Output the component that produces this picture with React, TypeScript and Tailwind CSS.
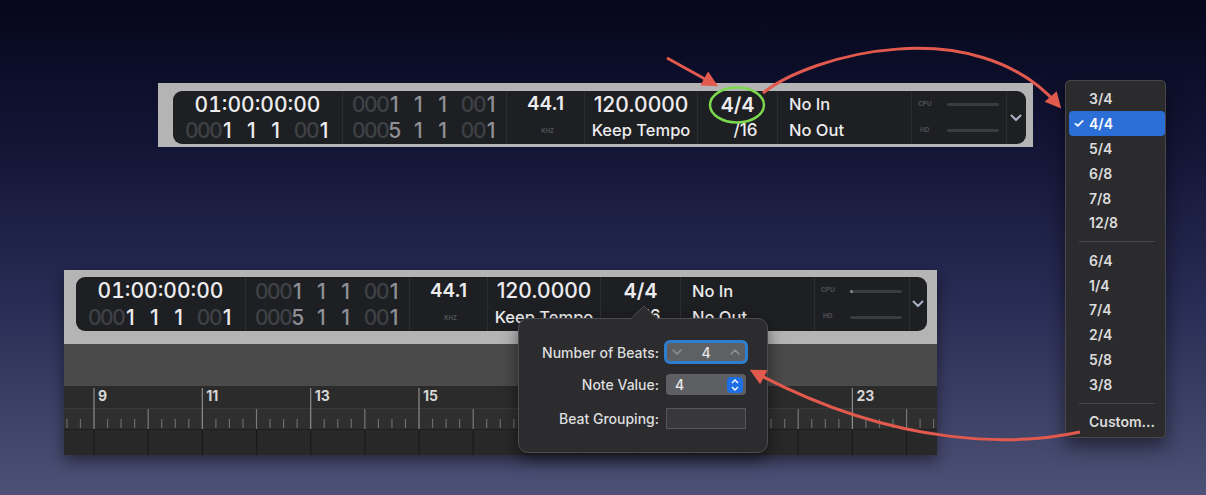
import React from "react";

type Seg = [string, string];

function Mono({ segs }: { segs: Seg[] }) {
  const out: React.ReactNode[] = [];
  segs.forEach(([t, c], i) => {
    t.split("").forEach((ch, j) => {
      out.push(
        <span key={i + "-" + j} className={"inline-block w-[12.1px] text-center " + c}>
          {ch === " " ? "\u00a0" : ch}
        </span>
      );
    });
  });
  return <div className="flex text-[21px] font-medium leading-none">{out}</div>;
}

const DIM = "text-[#3f4146]";
const MID = "text-[#8e9095]";
const BRIGHT = "text-[#ececee]";

function Chevron({ cls }: { cls: string }) {
  return (
    <svg width="12" height="8" viewBox="0 0 12 8" className={cls}>
      <polyline points="1.5,1.5 6,6 10.5,1.5" fill="none" stroke="#aab4c6" strokeWidth="2" strokeLinecap="round" strokeLinejoin="round" />
    </svg>
  );
}

function LCD({ level }: { level?: boolean }) {
  const col = "flex flex-col justify-center border-r border-[#2c2d31]";
  const row = "h-[26px] flex items-center justify-center";
  return (
    <div className="flex h-full w-full rounded-[9px] bg-[#1e1f22] text-[#ececee]">
      <div className={col + " w-[170px]"}>
        <div className={row + " text-[21px] font-medium tabular-nums"}>01:00:00:00</div>
        <div className={row}>
          <Mono segs={[["000", DIM], ["1 1 1 ", BRIGHT], ["00", DIM], ["1", BRIGHT]]} />
        </div>
      </div>
      <div className={col + " w-[164px]"}>
        <div className={row}>
          <Mono segs={[["000", DIM], ["1 1 1 ", MID], ["00", DIM], ["1", MID]]} />
        </div>
        <div className={row}>
          <Mono segs={[["000", DIM], ["5 1 1 ", MID], ["00", DIM], ["1", MID]]} />
        </div>
      </div>
      <div className={col + " w-[78px]"}>
        <div className={row + " text-[19px] font-semibold"}>44.1</div>
        <div className={row + " text-[6px] font-semibold text-[#55575c] pl-[4px]"}>KHZ</div>
      </div>
      <div className={col + " w-[113px]"}>
        <div className={row + " text-[21px] font-medium"}>120.0000</div>
        <div className={row + " text-[16.5px] font-medium"}>Keep Tempo</div>
      </div>
      <div className={col + " w-[80px]"}>
        <div className={row + " text-[20px] font-semibold"}>4/4</div>
        <div className={row + " text-[17px] font-medium pl-[16px]"}>/16</div>
      </div>
      <div className={col + " w-[134px] pl-[11px]"}>
        <div className="h-[26px] flex items-center text-[16.5px] font-medium">No In</div>
        <div className="h-[26px] flex items-center text-[16.5px] font-medium">No Out</div>
      </div>
      <div className={col + " w-[95px] pl-[6px]"}>
        <div className="h-[26px] flex items-center">
          <span className="w-[29px] text-[6.5px] font-bold text-[#4d4f55]">CPU</span>
          <div className="relative h-[3px] w-[52px] rounded-full bg-[#3b3c41]">
            {level ? <div className="absolute left-0 top-0 h-[3px] w-[3px] rounded-full bg-[#8a8c92]" /> : null}
          </div>
        </div>
        <div className="h-[26px] flex items-center">
          <span className="w-[29px] pl-[2px] text-[6.5px] font-bold text-[#4d4f55]">HD</span>
          <div className="h-[3px] w-[52px] rounded-full bg-[#3b3c41]" />
        </div>
      </div>
      <div className="flex flex-1 items-center justify-center pr-[2px]">
        <Chevron cls="" />
      </div>
    </div>
  );
}

function Ruler() {
  const W = 873;
  const x0 = 30;
  const bw = 54.17;
  const hidden = [17, 19, 21];
  const els: React.ReactNode[] = [];
  for (let b = -1; b <= 16; b++) {
    const x = x0 + b * bw;
    const bar = 9 + b;
    for (let k = 1; k < 4; k++) {
      const tx = x + k * (bw / 4);
      if (tx > 0 && tx < W) els.push(<line key={"t" + b + k} x1={tx} x2={tx} y1={33} y2={42} stroke="#6c6c6c" strokeWidth="1.2" />);
    }
    if (x < 0 || x > W) continue;
    if (bar % 2 === 1) {
      els.push(<line key={"m" + b} x1={x} x2={x} y1={2} y2={43} stroke="#8e8e8e" strokeWidth="1.2" />);
      if (hidden.indexOf(bar) < 0)
        els.push(
          <text key={"n" + b} x={x + 4} y={15} fill="#d6d6d6" fontSize="14" fontWeight="700" fontFamily="Inter, 'Liberation Sans', sans-serif">
            {bar}
          </text>
        );
    } else {
      els.push(<line key={"e" + b} x1={x} x2={x} y1={23} y2={43} stroke="#7a7a7a" strokeWidth="1.2" />);
    }
    els.push(<line key={"g" + b} x1={x} x2={x} y1={43} y2={69} stroke="#1a1a1a" strokeWidth="1.2" />);
  }
  return (
    <svg width={W} height={69} className="block">
      <rect x={0} y={0} width={W} height={22} fill="#2b2b2b" />
      <rect x={0} y={22} width={W} height={21} fill="#2f2f2f" />
      <line x1={0} x2={W} y1={22.5} y2={22.5} stroke="#3a3a3a" />
      <rect x={0} y={43} width={W} height={26} fill="#282828" />
      <line x1={0} x2={W} y1={43.5} y2={43.5} stroke="#1e1e1e" />
      {els}
    </svg>
  );
}

const MENU: (string | null)[] = ["3/4", "4/4", "5/4", "6/8", "7/8", "12/8", null, "6/4", "1/4", "7/4", "2/4", "5/8", "3/8", null, "Custom..."];

function SmallChev({ up }: { up?: boolean }) {
  return (
    <svg width="10" height="6" viewBox="0 0 10 6">
      <polyline points={up ? "1,5 5,1 9,5" : "1,1 5,5 9,1"} fill="none" stroke="#8f9095" strokeWidth="1.5" strokeLinecap="round" strokeLinejoin="round" />
    </svg>
  );
}

export default function App() {
  return (
    <div className="relative h-[495px] w-[1206px] overflow-hidden bg-[linear-gradient(to_bottom,#06071c_0%,#121435_28%,#282b53_60%,#4d5175_100%)] font-[Inter,'Liberation_Sans',sans-serif]">
      {/* top bar */}
      <div className="absolute left-[158px] top-[83px] h-[64px] w-[875px] bg-[#b4b4b4] pb-[3px] pl-[15px] pr-[7px] pt-[8px]">
        <LCD />
      </div>

      {/* bottom window */}
      <div className="absolute left-[64px] top-[270px] flex h-[185px] w-[873px] flex-col shadow-[0_6px_14px_rgba(0,0,0,0.45)]">
        <div className="h-[74px] bg-[#b4b4b4] pb-[13px] pl-[12px] pr-[10px] pt-[7px]">
          <LCD level />
        </div>
        <div className="h-[42px] bg-[#4a4a4a]" />
        <Ruler />
      </div>

      {/* popover */}
      <div className="absolute left-[518px] top-[318px] h-[135px] w-[250px] rounded-[10px] border border-[#4d4d51] bg-[#2c2c2f] pl-[22px] pr-[19px] pt-[21px] text-[14px] font-medium text-[#dedede] shadow-[0_6px_16px_rgba(0,0,0,0.5)]">
        <svg width="30" height="16" className="absolute left-[110px] top-[-14px]">
          <path d="M1 14.5 L15 1 L29 14.5" fill="#2c2c2f" stroke="#4d4d51" strokeWidth="1" />
          <rect x="2" y="13.5" width="26" height="3" fill="#2c2c2f" />
        </svg>
        <div className="flex h-[24px] items-center">
          <div className="w-[118px] text-right">Number of Beats:</div>
          <div className="ml-[5px] flex h-[24px] w-[84px] items-center justify-between rounded-[6px] border-[3px] border-[#2f7fd0] bg-[#5f6064] px-[5px]">
            <SmallChev />
            <span className="text-[#e6e6e6]">4</span>
            <SmallChev up />
          </div>
        </div>
        <div className="mt-[10px] flex h-[21px] items-center">
          <div className="w-[118px] text-right">Note Value:</div>
          <div className="ml-[7px] flex h-[21px] w-[80px] items-center justify-between rounded-[4px] bg-[#5e5f63] pl-[9px] pr-[3px]">
            <span className="text-[#ececec]">4</span>
            <div className="flex h-[16px] w-[16px] flex-col items-center justify-center gap-[2px] rounded-[4px] bg-[#1e6fe6]">
              <svg width="8" height="5" viewBox="0 0 8 5"><polyline points="1,4 4,1 7,4" fill="none" stroke="#fff" strokeWidth="1.4" /></svg>
              <svg width="8" height="5" viewBox="0 0 8 5"><polyline points="1,1 4,4 7,1" fill="none" stroke="#fff" strokeWidth="1.4" /></svg>
            </div>
          </div>
        </div>
        <div className="mt-[13px] flex h-[21px] items-center">
          <div className="w-[118px] text-right">Beat Grouping:</div>
          <div className="ml-[7px] h-[21px] w-[80px] border border-[#57575b] bg-[#38383b]" />
        </div>
      </div>

      {/* menu */}
      <div className="absolute left-[1065px] top-[80px] h-[358px] w-[101px] rounded-[5px] border border-[#48484b] bg-[#2b2b2e] pt-[5.6px] text-[14px] font-semibold text-[#dcdcdc] shadow-[0_8px_18px_rgba(0,0,0,0.5)]">
        {MENU.map((m, i) =>
          m === null ? (
            <div key={i} className="flex h-[12.6px] items-center">
              <div className="ml-[13px] h-[1px] w-[76px] bg-[#46464a]" />
            </div>
          ) : (
            <div key={i} className={"ml-[3px] flex h-[24.8px] items-center rounded-[4px] " + (m === "4/4" ? "bg-[#2a6ed6] text-white" : "")}>
              <span className="w-[20px] pl-[4px] text-[13px]">{m === "4/4" ? "\u2713" : ""}</span>
              <span>{m}</span>
            </div>
          )
        )}
      </div>

      {/* annotations */}
      <svg width="1206" height="495" className="pointer-events-none absolute left-0 top-0">
        <defs>
          <marker id="ah" viewBox="0 0 10 10" refX="7" refY="5" markerWidth="18" markerHeight="16" markerUnits="userSpaceOnUse" orient="auto">
            <path d="M0,0 L10,5 L0,10 z" fill="#e25a4e" />
          </marker>
        </defs>
        <ellipse cx="737" cy="105" rx="27" ry="17.5" fill="none" stroke="#7cd84e" strokeWidth="2.5" />
        <line x1="667" y1="58" x2="714" y2="84" stroke="#e25a4e" strokeWidth="3" markerEnd="url(#ah)" />
        <path d="M763 93 C 810 55, 975 10, 1058 105" fill="none" stroke="#e25a4e" strokeWidth="3" markerEnd="url(#ah)" />
        <path d="M1080 432 C 1020 445, 900 450, 754 372" fill="none" stroke="#e25a4e" strokeWidth="3" markerEnd="url(#ah)" />
      </svg>
    </div>
  );
}
